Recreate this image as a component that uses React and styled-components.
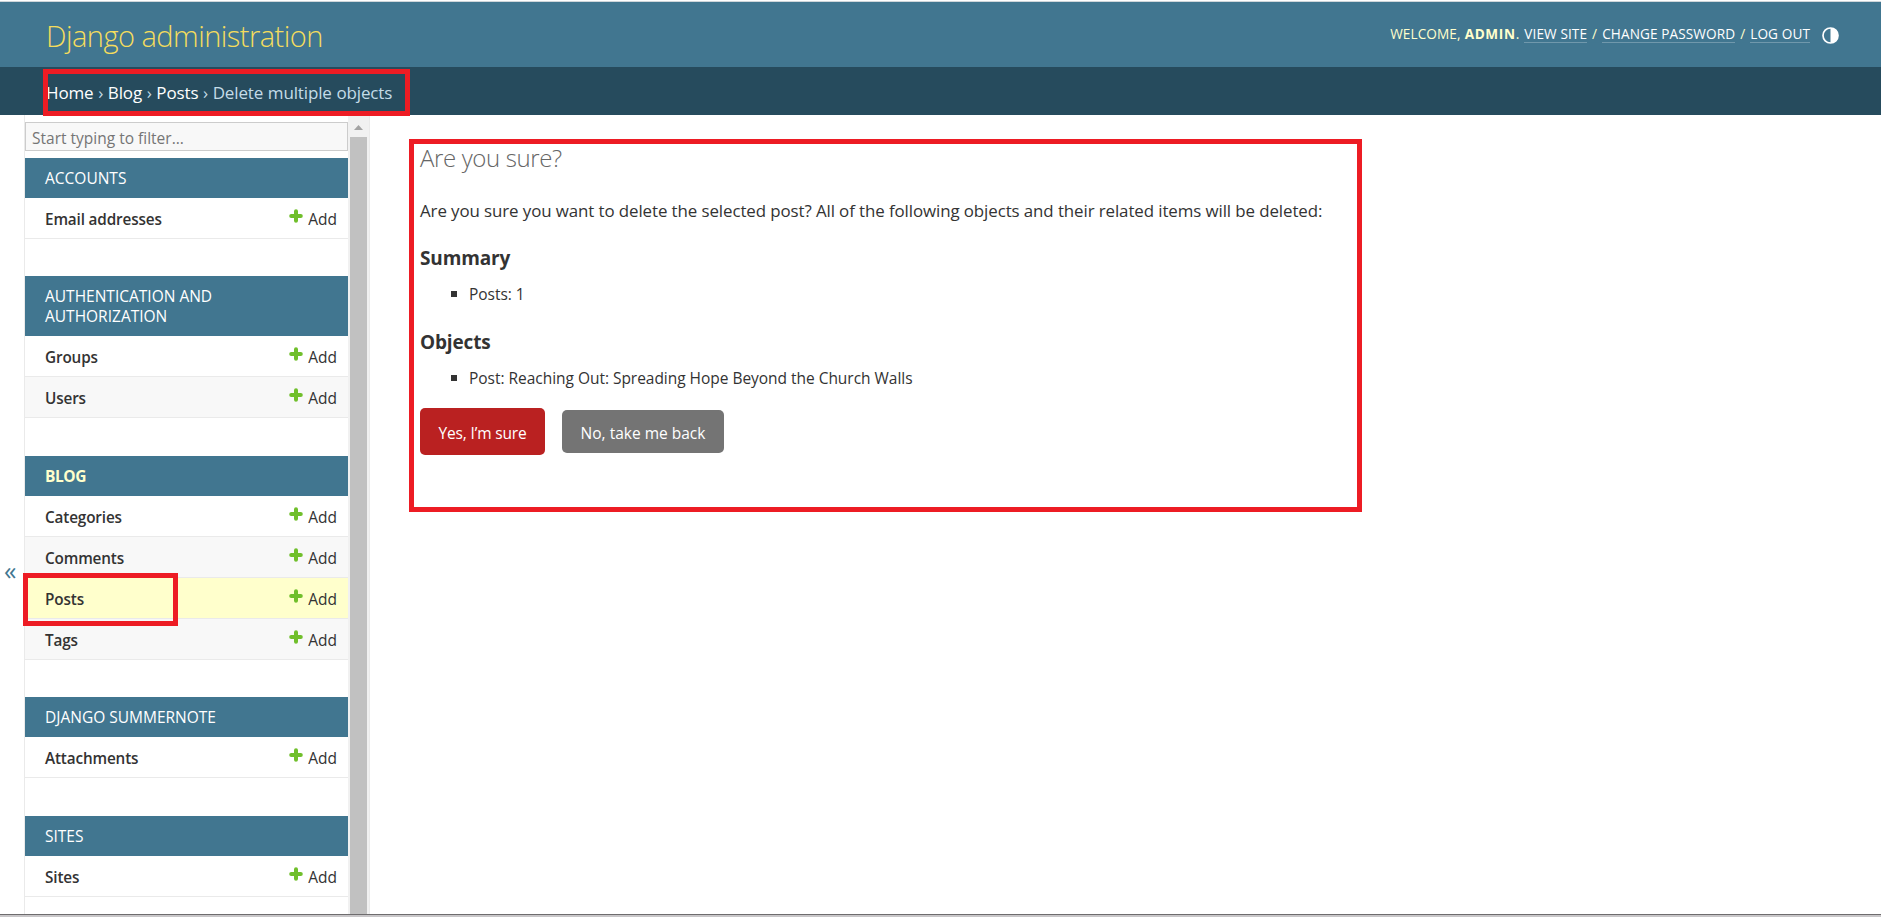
import React from 'react';
import styled, { createGlobalStyle } from 'styled-components';

const GlobalStyle = createGlobalStyle`
  * { box-sizing: border-box; }
  body {
    margin: 0;
    background: #fff;
    color: #333;
    font-family: "Open Sans", "Noto Sans", sans-serif;
    overflow: hidden;
  }
`;

const Page = styled.div`
  position: relative;
  display: flex;
  flex-direction: column;
  height: 917px;
  border-top: 1px solid #fff;
`;

const Header = styled.header`
  display: flex;
  flex: 0 0 66px;
  align-items: center;
  justify-content: space-between;
  padding: 1px 42px 0 46px;
  border-top: 1px solid #cfd6da;
  background: #417690;
`;

const Branding = styled.h1`
  margin: 2px 0 0;
  color: #f5dd5d;
  font-size: 29px;
  font-weight: 300;
  line-height: 36px;
  letter-spacing: -0.52px;
`;

const UserTools = styled.div`
  display: flex;
  align-items: center;
  color: #ffc;
  font-size: 13.6px;
  font-weight: 400;
  line-height: 18px;
  letter-spacing: 0.1px;
  text-transform: uppercase;
  margin-top: -2px;
`;

const UserName = styled.strong`
  margin-left: 4px;
  font-weight: 700;
  letter-spacing: 0.65px;
`;

const ToolLink = styled.a`
  margin: 0 ${(p) => p.$after ?? 5}px 0 5px;
  border-bottom: 1px solid rgba(255, 255, 255, 0.25);
  color: #fff;
  line-height: 17px;
`;

const Contrast = styled.svg`
  width: 17px;
  height: 17px;
  margin: 2px 0 0 12px;
`;

const Breadcrumbs = styled.nav`
  flex: 0 0 48px;
  padding: 3px 0 0 46px;
  background: #264b5d;
  color: #c4dce8;
  font-size: 17px;
  line-height: 45px;
  letter-spacing: -0.14px;
  word-spacing: 0.4px;
`;

const Crumb = styled.a`
  color: #fff;
`;

const Body = styled.div`
  display: flex;
  flex: 1;
  min-height: 0;
`;

const Toggle = styled.button`
  display: flex;
  flex: 0 0 24px;
  align-items: center;
  padding: 111px 0 0 4px;
  border: 0;
  background: none;
  color: #417690;
  font: 400 25px/24px "Open Sans", sans-serif;
`;

const Sidebar = styled.aside`
  display: flex;
  flex: 0 0 346px;
  border: solid #eaeaea;
  border-width: 0 1px;
  overflow: hidden;
`;

const Modules = styled.div`
  flex: 0 0 323px;
  padding-top: 7px;
`;

const Filter = styled.input`
  display: block;
  width: 100%;
  height: 29px;
  margin: 0 0 7px;
  padding: 2px 6px 0;
  border: 1px solid #ccc;
  border-radius: 0;
  background: #f8f8f8;
  font: 400 15.5px/20px "Open Sans", sans-serif;
  &::placeholder { color: #757575; }
`;

const Module = styled.section`
  margin-bottom: ${(p) => p.$gap}px;
`;

const Caption = styled.h2`
  margin: 0;
  padding: 10px 100px 10px 20px;
  background: #417690;
  color: ${(p) => (p.$current ? '#ffc' : '#fff')};
  font-size: 15.5px;
  font-weight: ${(p) => (p.$current ? 700 : 400)};
  line-height: 20px;
  letter-spacing: ${(p) => (p.$current ? -0.4 : 0)}px;
  text-transform: uppercase;
`;

const ModelRow = styled.div`
  display: flex;
  align-items: center;
  justify-content: space-between;
  height: 41px;
  padding: 2px 11px 0 20px;
  border-bottom: 1px solid #eaeaea;
  background: ${(p) => (p.$current ? '#ffc' : p.$even ? '#f8f8f8' : '#fff')};
  line-height: 20px;
`;

const ModelName = styled.a`
  font-size: 15.3px;
  font-weight: 600;
  letter-spacing: -0.15px;
`;

const AddLink = styled.a`
  display: flex;
  align-items: center;
  gap: 5px;
  font-size: 15.5px;
`;

const Plus = styled.svg`
  width: 14px;
  height: 14px;
  margin-bottom: 7px;
`;

const Scrollbar = styled.div`
  display: flex;
  flex: 1;
  flex-direction: column;
  align-items: center;
  background: #f1f1f1;
`;

const ScrollArrow = styled.svg`
  flex: 0 0 22px;
  width: 17px;
`;

const Thumb = styled.div`
  flex: 1;
  width: 17px;
  background: #c1c1c1;
`;

const Content = styled.main`
  flex: 1;
  padding: 28px 50px 0;
`;

const Title = styled.h1`
  margin: 0 0 25px;
  color: #666;
  font-size: 24px;
  font-weight: 300;
  line-height: 30px;
  letter-spacing: -0.37px;
`;

const Message = styled.p`
  margin: 0 0 22px;
  font-size: 16.9px;
  line-height: 26px;
  letter-spacing: -0.095px;
`;

const Subtitle = styled.h2`
  margin: 0 0 14px;
  font-size: 19px;
  font-weight: 700;
  line-height: 24px;
  letter-spacing: -0.15px;
`;

const Objects = styled.ul`
  margin: 0 0 ${(p) => p.$after}px;
  padding: 0;
  list-style: none;
`;

const ObjectItem = styled.li`
  display: flex;
  align-items: center;
  gap: 12px;
  padding-left: 31px;
  font-size: 15.5px;
  line-height: 20px;
  letter-spacing: -0.03px;
  &::before {
    content: "";
    width: 6px;
    height: 6px;
    background: #333;
  }
`;

const Actions = styled.div`
  display: flex;
  align-items: center;
  gap: 17px;
`;

const Button = styled.button`
  width: ${(p) => p.$width}px;
  height: ${(p) => p.$height}px;
  padding: 2px 0 0;
  border: 0;
  border-radius: 5px;
  background: ${(p) => (p.$danger ? '#ba2121' : '#747474')};
  color: #fff;
  font: 400 15.5px/20px "Open Sans", sans-serif;
  letter-spacing: ${(p) => (p.$danger ? -0.15 : 0)}px;
`;

const BottomEdge = styled.div`
  flex: 0 0 3px;
  border-top: 1px solid #6e6c6e;
  background: #c8c6c8;
`;

const Highlight = styled.div`
  position: absolute;
  top: ${(p) => p.$y - 1}px;
  left: ${(p) => p.$x}px;
  width: ${(p) => p.$w}px;
  height: ${(p) => p.$h}px;
  border: 5px solid #ed1c24;
  pointer-events: none;
`;

const modules = [
  { name: 'Accounts', gap: 37, models: ['Email addresses'] },
  { name: 'Authentication and Authorization', gap: 38, models: ['Groups', 'Users'] },
  { name: 'Blog', gap: 37, current: true, models: ['Categories', 'Comments', 'Posts', 'Tags'] },
  { name: 'Django Summernote', gap: 38, models: ['Attachments'] },
  { name: 'Sites', gap: 0, models: ['Sites'] },
];

export default function App() {
  return (
    <Page>
      <GlobalStyle />
      <Header>
        <Branding>Django administration</Branding>
        <UserTools>
          <span>Welcome,</span>
          <UserName>admin</UserName>
          <span>.</span>
          <ToolLink>View site</ToolLink>/<ToolLink>Change password</ToolLink>/
          <ToolLink $after={0}>Log out</ToolLink>
          <Contrast viewBox="0 0 17 17">
            <circle cx="8.5" cy="8.5" r="7.5" fill="none" stroke="#fff" strokeWidth="1.7" />
            <path d="M8.5 1a7.5 7.5 0 0 1 0 15z" fill="#fff" />
          </Contrast>
        </UserTools>
      </Header>
      <Breadcrumbs>
        <Crumb>Home</Crumb> › <Crumb>Blog</Crumb> › <Crumb>Posts</Crumb> › Delete multiple objects
      </Breadcrumbs>
      <Body>
        <Toggle>«</Toggle>
        <Sidebar>
          <Modules>
            <Filter placeholder="Start typing to filter..." />
            {modules.map((m) => (
              <Module key={m.name} $gap={m.gap}>
                <Caption $current={m.current}>{m.name}</Caption>
                {m.models.map((model, i) => (
                  <ModelRow key={model} $even={i % 2 === 1} $current={model === 'Posts'}>
                    <ModelName>{model}</ModelName>
                    <AddLink>
                      <Plus viewBox="0 0 14 14">
                        <path d="M7 2.2v9.6M2.2 7h9.6" stroke="#70bf2b" strokeWidth="4" strokeLinecap="round" />
                      </Plus>
                      Add
                    </AddLink>
                  </ModelRow>
                ))}
              </Module>
            ))}
          </Modules>
          <Scrollbar>
            <ScrollArrow viewBox="0 0 17 22">
              <path d="M4 15l4.5-5 4.5 5z" fill="#a3a3a3" />
            </ScrollArrow>
            <Thumb />
          </Scrollbar>
        </Sidebar>
        <Content>
          <Title>Are you sure?</Title>
          <Message>
            Are you sure you want to delete the selected post? All of the following objects and their
            related items will be deleted:
          </Message>
          <Subtitle>Summary</Subtitle>
          <Objects $after={26}>
            <ObjectItem>Posts: 1</ObjectItem>
          </Objects>
          <Subtitle>Objects</Subtitle>
          <Objects $after={20}>
            <ObjectItem>Post: Reaching Out: Spreading Hope Beyond the Church Walls</ObjectItem>
          </Objects>
          <Actions>
            <Button $danger $width={125} $height={47}>Yes, I’m sure</Button>
            <Button $width={162} $height={43}>No, take me back</Button>
          </Actions>
        </Content>
      </Body>
      <BottomEdge />
      <Highlight $x={43} $y={69} $w={367} $h={47} />
      <Highlight $x={23} $y={573} $w={155} $h={53} />
      <Highlight $x={409} $y={139} $w={953} $h={373} />
    </Page>
  );
}
